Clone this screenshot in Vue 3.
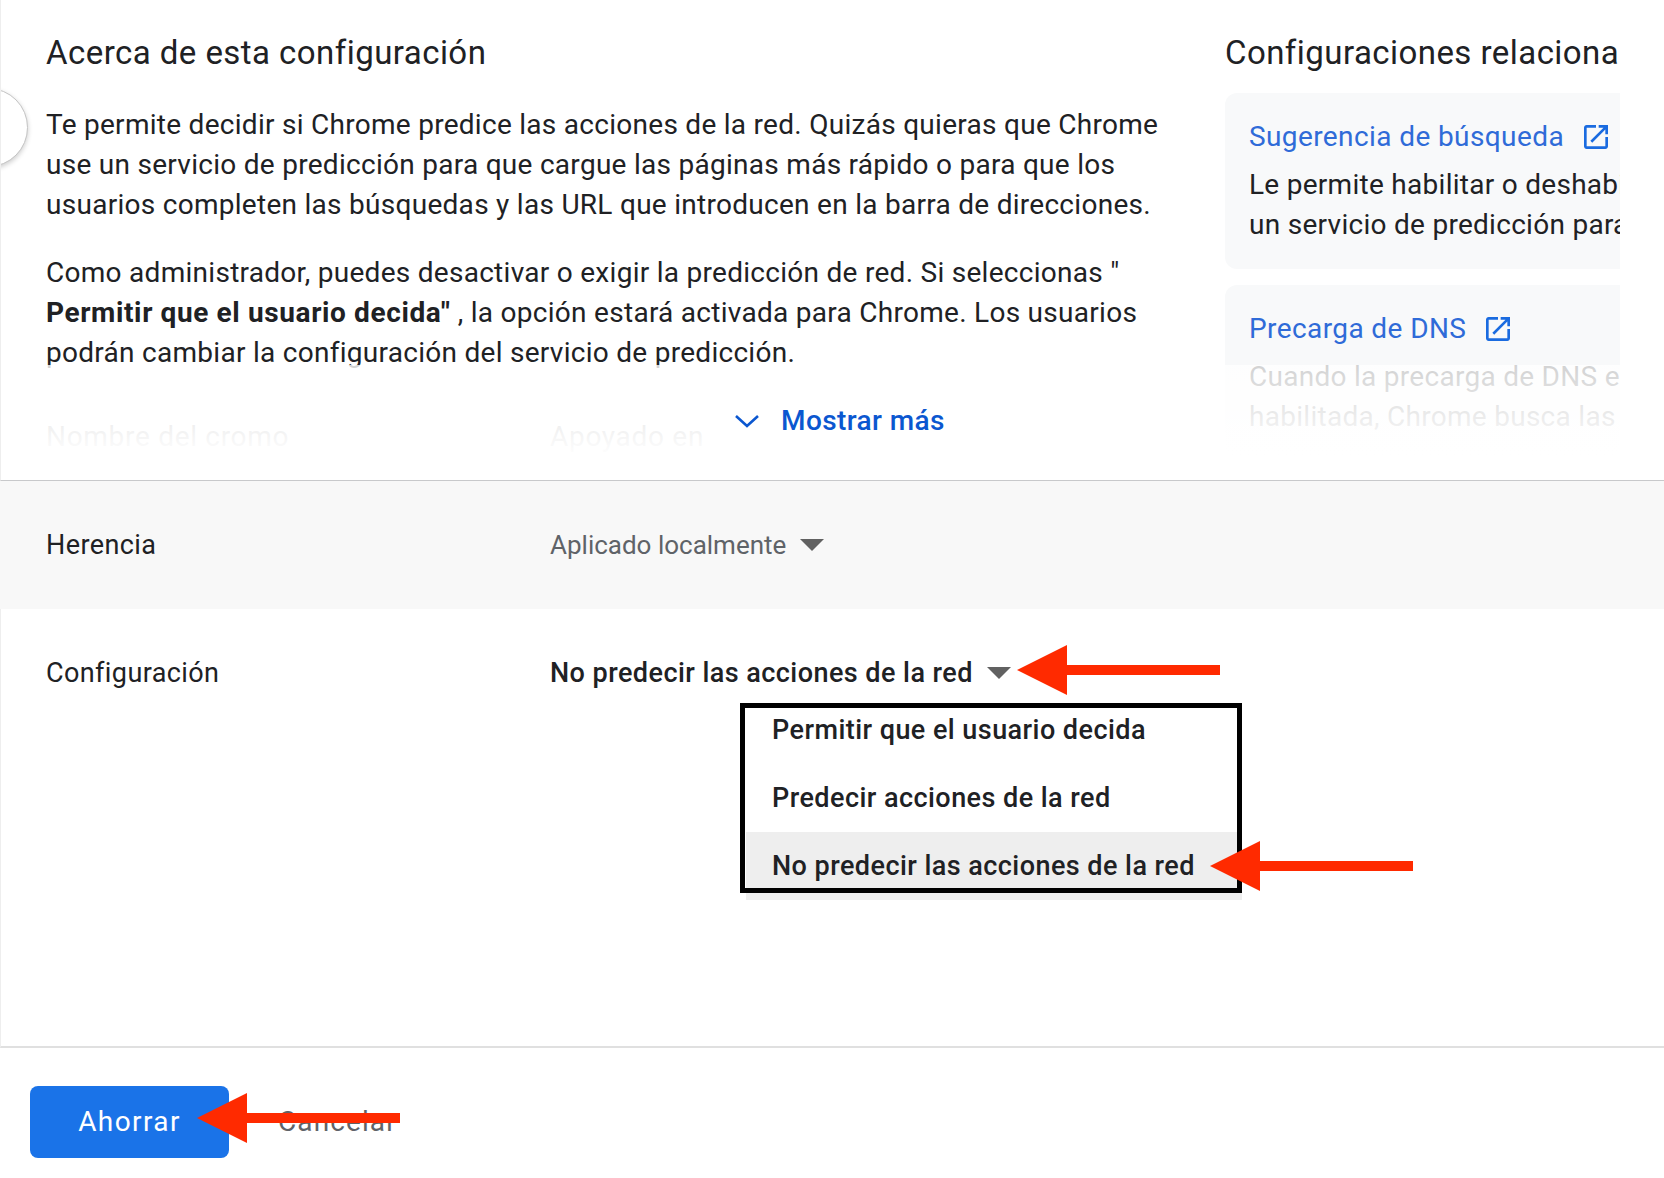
<script setup>
const options = [
  { label: "Permitir que el usuario decida", selected: false },
  { label: "Predecir acciones de la red", selected: false },
  { label: "No predecir las acciones de la red", selected: true },
];

const related = [
  {
    title: "Sugerencia de búsqueda",
    lines: ["Le permite habilitar o deshabilitar", "un servicio de predicción para que"],
  },
  {
    title: "Precarga de DNS",
    lines: ["Cuando la precarga de DNS está", "habilitada, Chrome busca las direcciones"],
  },
];

const arrows = ["arrow-select", "arrow-option", "arrow-save"];
</script>

<template>
  <div class="page">
    <section class="about">
      <div class="main">
        <h2>Acerca de esta configuración</h2>
        <p>
          Te permite decidir si Chrome predice las acciones de la red. Quizás quieras que Chrome<br />
          use un servicio de predicción para que cargue las páginas más rápido o para que los<br />
          usuarios completen las búsquedas y las URL que introducen en la barra de direcciones.
        </p>
        <p>
          Como administrador, puedes desactivar o exigir la predicción de red. Si seleccionas "<br />
          <strong>Permitir que el usuario decida"</strong> , la opción estará activada para Chrome. Los usuarios<br />
          podrán cambiar la configuración del servicio de predicción.
        </p>
        <div class="table-head">
          <span>Nombre del cromo</span>
          <span>Apoyado en</span>
        </div>
      </div>
      <aside class="side">
        <h2>Configuraciones relacionadas</h2>
        <div v-for="item in related" :key="item.title" class="card">
          <div class="card-title">
            <span>{{ item.title }}</span>
            <svg viewBox="0 0 24 24" width="32" height="32">
              <path d="M19 19H5V5h7V3H5c-1.11 0-2 .9-2 2v14c0 1.1.89 2 2 2h14c1.1 0 2-.9 2-2v-7h-2v7zM14 3v2h3.59l-9.83 9.83 1.41 1.41L19 6.41V10h2V3h-7z" />
            </svg>
          </div>
          <div v-for="line in item.lines" :key="line" class="card-line">{{ line }}</div>
        </div>
      </aside>
      <div class="fade">
        <div class="more">
          <svg viewBox="0 0 26 14" width="26" height="14">
            <path d="M2 2l11 10L24 2" fill="none" stroke="currentColor" stroke-width="2.6" />
          </svg>
          <span>Mostrar más</span>
        </div>
      </div>
      <div class="knob"></div>
    </section>

    <section class="row inherit">
      <div class="label">Herencia</div>
      <div class="value muted">
        <span>Aplicado localmente</span>
        <i class="caret"></i>
      </div>
    </section>

    <section class="row config">
      <div class="label">Configuración</div>
      <div class="value strong">
        <span>No predecir las acciones de la red</span>
        <i class="caret"></i>
      </div>
      <ul class="menu">
        <li v-for="opt in options" :key="opt.label" :class="{ selected: opt.selected }">{{ opt.label }}</li>
      </ul>
      <div class="callout"></div>
    </section>

    <footer class="actions">
      <button class="save">Ahorrar</button>
      <button class="cancel">Cancelar</button>
    </footer>

    <svg v-for="a in arrows" :key="a" :class="['arrow', a]" viewBox="0 0 203 50" width="203" height="50">
      <polygon points="0,25 50,0 50,20 203,20 203,30 50,30 50,50" />
    </svg>
  </div>
</template>

<style>
html,
body {
  margin: 0;
  background: #fff;
}
</style>

<style scoped>
.page {
  position: relative;
  width: 1664px;
  height: 1178px;
  overflow: hidden;
  background: #fff;
  color: #202124;
  font-family: Roboto, "Liberation Sans", sans-serif;
  font-size: 28px;
  line-height: 40px;
  letter-spacing: 0.28px;
}

.about {
  position: relative;
  display: flex;
  height: 481px;
  box-sizing: border-box;
  overflow: hidden;
  border-left: 1px solid #eeeeee;
  border-bottom: 1px solid #c8c9cb;
}
h2 {
  margin: 0 0 32px;
  font-size: 33px;
  font-weight: 400;
  letter-spacing: 0.45px;
  white-space: nowrap;
}
p {
  margin: 0 0 28px;
}
strong {
  letter-spacing: 0.62px;
}
.main {
  width: 1179px;
  flex-shrink: 0;
  box-sizing: border-box;
  padding: 33px 0 0 45px;
  white-space: nowrap;
}
.table-head {
  display: flex;
  margin-top: 44px;
  letter-spacing: 0.7px;
}
.table-head span:first-child {
  width: 504px;
}

.side {
  width: 395px;
  flex-shrink: 0;
  margin-left: 45px;
  padding-top: 33px;
  overflow: hidden;
  white-space: nowrap;
}
.side h2 {
  margin-bottom: 20px;
}
.card {
  box-sizing: border-box;
  padding: 24px 0 24px 24px;
  margin-bottom: 16px;
  background: #f8f9fa;
  border-radius: 12px 0 0 12px;
}
.card-title {
  display: flex;
  align-items: center;
  gap: 16px;
  margin-bottom: 8px;
  color: #2f6bd8;
  letter-spacing: 0.4px;
}
.card-title svg {
  fill: #1a6be0;
}

.fade {
  position: absolute;
  left: 0;
  right: 0;
  top: 365px;
  bottom: 0;
  background: linear-gradient(to bottom, rgba(255, 255, 255, 0.8), #fff 80%);
}
.more {
  position: absolute;
  left: 733px;
  top: 36px;
  display: flex;
  align-items: center;
  gap: 21px;
  color: #0b57d0;
  font-weight: 500;
  letter-spacing: 0.4px;
}

.knob {
  position: absolute;
  left: -52px;
  top: 88px;
  width: 77px;
  height: 77px;
  background: #fff;
  border: 1px solid #c4c4c4;
  border-radius: 50%;
  box-shadow: 0 2px 5px rgba(0, 0, 0, 0.2);
}

.row {
  display: flex;
  padding-left: 46px;
  font-size: 27px;
  letter-spacing: 0.4px;
}
.label {
  width: 504px;
}
.value {
  display: flex;
  align-items: center;
  gap: 14px;
  height: 40px;
}
.inherit {
  height: 128px;
  align-items: center;
  background: #f8f8f8;
}
.muted {
  color: #5f6368;
  font-size: 26px;
  letter-spacing: 0;
}
.strong {
  font-weight: 500;
  letter-spacing: 0.45px;
}
.caret {
  width: 0;
  height: 0;
  border-left: 12px solid transparent;
  border-right: 12px solid transparent;
  border-top: 12px solid #616161;
}

.config {
  position: relative;
  height: 439px;
  box-sizing: border-box;
  padding: 44px 0 0 45px;
  border-left: 1px solid #eeeeee;
  border-bottom: 2px solid #e0e0e0;
}
.menu {
  position: absolute;
  left: 745px;
  top: 87px;
  width: 496px;
  margin: 0;
  padding: 0;
  list-style: none;
  font-weight: 500;
  letter-spacing: 0.45px;
}
.menu li {
  height: 68px;
  line-height: 68px;
  padding-left: 26px;
}
.menu li.selected {
  background: #eeeeee;
}
.callout {
  position: absolute;
  left: 739px;
  top: 94px;
  width: 502px;
  height: 190px;
  box-sizing: border-box;
  border: 5px solid #000;
}

.actions {
  display: flex;
  align-items: center;
  gap: 49px;
  padding: 38px 0 0 30px;
}
button {
  border: 0;
  padding: 0;
  background: none;
  font: inherit;
  letter-spacing: 1.1px;
}
.save {
  width: 199px;
  height: 72px;
  border-radius: 8px;
  background: #1a73e8;
  color: #fff;
  letter-spacing: 1.4px;
}
.cancel {
  color: #5f6368;
}

.arrow {
  position: absolute;
  fill: #ff2a00;
}
.arrow-select {
  left: 1017px;
  top: 645px;
}
.arrow-option {
  left: 1210px;
  top: 841px;
}
.arrow-save {
  left: 197px;
  top: 1093px;
}
</style>
